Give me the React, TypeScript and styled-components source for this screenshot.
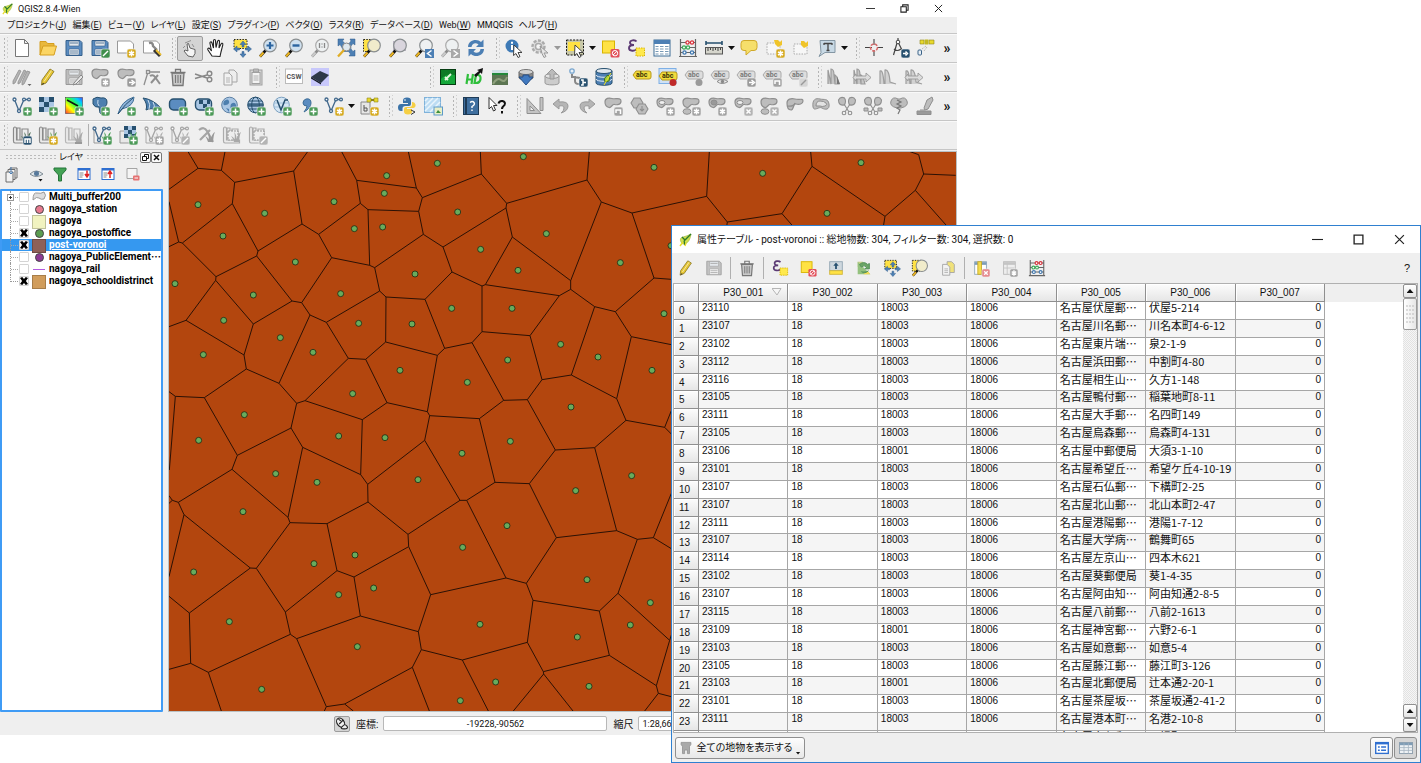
import React from "react";
import styled, { createGlobalStyle, css } from "styled-components";

const GlobalStyle = createGlobalStyle`
  * { box-sizing: border-box; }
  body { margin: 0; background: #fff; color: #111; font-family: Roboto, "Noto Sans CJK JP", sans-serif; }
  button, input, select { font: inherit; color: inherit; }
`;

const gridFont = `"Liberation Sans", "Noto Sans CJK JP", sans-serif`;

/* ---------- icon drawings, all on a 20 x 20 grid ---------- */

const G = "#8f8f8f";
const g = "#bdbdbd";
const B = "#4c7fb4";
const N = "#27506f";

const Badge = ({ c, d, s = "#fff" }: { c: string; d: string; s?: string }) => (
  <g>
    <rect x="11" y="11" width="9" height="9" rx="2" fill={c} stroke="#f0f0f0" strokeWidth=".6" />
    <path d={d} stroke={s} strokeWidth="1.5" fill="none" />
  </g>
);
const PLUS = "M15.5 12.5v6M12.5 15.5h6";
const STAR = "M15.5 12.5v6M13 14l5 3M18 14l-5 3";
const CROSS = "M13.5 13.5l4 4M17.5 13.5l-4 4";
const plus = <Badge c="#4c9a58" d={PLUS} />;
const star = <Badge c="#d6aa1f" d={STAR} />;
const greyStar = <Badge c="#a3a3a3" d={STAR} />;
const greyX = <Badge c="#b4b4b4" d={CROSS} />;
const greyMove = <Badge c="#9b9b9b" d="M13 15.5h4M15.5 13l3 2.5-3 2.5" />;

const Lens = ({ fill = "#eef1f2", grey = false }: { fill?: string; grey?: boolean }) => (
  <g>
    <path d="M8 12L2 18.5" stroke={grey ? "#8a8a8a" : "#111"} strokeWidth="2.6" />
    <path d="M5.5 14.5L2 18.5" stroke={grey ? "#c9c9c9" : "#e8b324"} strokeWidth="2.2" />
    <circle cx="12" cy="7.5" r="6.3" fill={fill} stroke={grey ? "#aaa" : "#8a8f91"} strokeWidth="1.2" />
  </g>
);
const Floppy = ({ c, l }: { c: string; l: string }) => (
  <g>
    <path d="M2 2.5h14l2 2v13H2z" fill={c} stroke={l} />
    <path d="M5 3h10v5H5z" fill="#e4e8ec" stroke={l} strokeWidth=".6" />
    <path d="M5 11h10v6H5z" fill="#f4f4f4" stroke={l} strokeWidth=".6" />
    <path d="M6 13h8M6 15h8M6 5h8" stroke={l} strokeWidth=".8" />
  </g>
);
const Pencil = () => (
  <g>
    <path d="M4 13L12 2l4 2.5L8 16l-4.5 2z" fill="#e6c633" stroke="#8d7a26" strokeWidth=".9" />
    <path d="M13.5 3.5L6 14.5" stroke="#fff" strokeOpacity=".6" />
    <path d="M3.5 18l1.5-2.2 1.3 1z" fill="#333" />
  </g>
);
const Cursor = () => <path d="M10 7l8 7.5h-4l2 4-2 1-2-4-2.5 2z" fill="#fff" stroke="#333" strokeWidth=".9" />;
const Trash = () => (
  <g stroke="#777" strokeWidth="1.3">
    <path d="M4 6h12l-1 12.5H5z" fill="#c9c9c9" />
    <path d="M2.5 5.5h15M7.5 5V2.5h5V5" fill="none" />
    <path d="M7.5 8v8M10 8v8M12.5 8v8" strokeWidth="1.1" />
  </g>
);
const BLOB = "M2 6c0-4 4-4.5 7-3.500s9-1.500 9 2.500-4 4-6.500 3.500S8.500 12 6 11.500 2 9 2 6z";
const Blob = () => <path d={BLOB} fill={g} stroke={G} strokeWidth="1.2" />;
const Copy = ({ c = "#eee" }: { c?: string }) => (
  <g stroke="#a5a5a5">
    <path d="M9 3h5l3 3v9H9z" fill={c} />
    <path d="M4 6h5l3 3v9H4z" fill="#f2f2f2" />
    <path d="M6 11h4M6 13h4M6 15h4" strokeWidth=".8" />
  </g>
);
const Tag = ({ c = "#ddd", l = "#aaa", t = "#777", y = 8 }: { c?: string; l?: string; t?: string; y?: number }) => (
  <g>
    <path d={`M1 ${y}l3-4h13q2 0 2 2v4q0 2-2 2H4z`} fill={c} stroke={l} />
    <text x="4" y={y + 2} fill={t} fontSize="7" fontWeight="700" fontFamily="Roboto">abc</text>
  </g>
);
const Vee = ({ c = B }: { c?: string }) => (
  <g stroke={c} strokeWidth="1.3" fill="#fff">
    <path d="M2.5 3.5L7 15 12 3.5h4" fill="none" />
    <circle cx="2.5" cy="3.5" r="1.5" />
    <circle cx="12" cy="3.5" r="1.4" />
    <circle cx="17" cy="3.5" r="1.4" />
    <circle cx="7" cy="15" r="1.5" />
  </g>
);
const Checker = ({ x, y, n, w }: { x: number; y: number; n: number; w: number }) => (
  <g>
    {Array.from({ length: n * n }, (_, i) => (
      <rect key={i} x={x + (i % n) * w} y={y + Math.floor(i / n) * w} width={w} height={w} fill={((i % n) + Math.floor(i / n)) % 2 ? "#a9c6e4" : N} />
    ))}
  </g>
);
const Globe = ({ c = "#9cc3e6" }: { c?: string }) => (
  <g stroke={N} fill="none">
    <circle cx="9.5" cy="9" r="7.8" fill={c} />
    <path d="M2 9h15.5M3 5h13M3 13h13" />
    <ellipse cx="9.5" cy="9" rx="3.8" ry="7.8" />
  </g>
);
const Epsilon = () => (
  <g>
    <path d="M10.5 3.5C9 1.5 3.5 2 4 5c.2 2 3 2 4 2-2 0-5 .5-5 3 0 3.5 6 3.5 8 1" fill="none" stroke="#5b3a74" strokeWidth="1.9" />
    <rect x="10" y="10" width="8.5" height="8" fill="#ffe94d" stroke="#d8b400" strokeDasharray="1.5 1" />
  </g>
);
const Abacus = () => (
  <g>
    <path d="M2.5 1v18M17.5 1v18M1 18.5h18M3 4.5h14M3 9.5h14M3 14.5h14" stroke="#666" fill="none" strokeWidth="1.2" />
    <g fill="#fff" strokeWidth="1.3">
      <g stroke="#d8313a"><circle cx="9.5" cy="4.5" r="1.6" /><circle cx="14" cy="4.5" r="1.6" /></g>
      <g stroke="#3da957"><circle cx="6" cy="9.5" r="1.6" /><circle cx="10" cy="9.5" r="1.6" /></g>
      <g stroke="#3f77ae"><circle cx="6.5" cy="14.5" r="1.6" /><circle cx="14" cy="14.5" r="1.6" /></g>
    </g>
  </g>
);
const Deselect = () => (
  <g>
    <rect x="2.5" y="3" width="12" height="12" fill="#ffe244" stroke="#d8b400" />
    <rect x="10.5" y="11" width="9" height="8.5" rx="1.5" fill="#e2505a" />
    <circle cx="15" cy="15.2" r="2.7" stroke="#fff" fill="none" />
    <path d="M13 17l4-3.8" stroke="#fff" />
  </g>
);
const FourWay = () => (
  <g>
    <rect x="2" y="1.5" width="13" height="9" fill="#ffe244" stroke="#222" strokeDasharray="1.5 1.3" />
    <g fill={B} stroke="#2c5b8a" strokeWidth=".5">
      <path d="M11 3l3 3.5h-2V9h-2V6.5H8zM11 19.5l3-3.5h-2v-2.5h-2V16H8zM1.500 11L5 8v2h2.500v2H5v2zM19.500 11L16 8v2h-2.500v2H16v2z" />
    </g>
  </g>
);
const Db = () => (
  <g fill={B} stroke={N}>
    <path d="M2 4v12c0 3 16 3 16 0V4" />
    <ellipse cx="10" cy="4" rx="8" ry="2.5" fill="#dfe7ee" />
    <path d="M2 8c0 3 16 3 16 0M2 12c0 3 16 3 16 0" fill="none" stroke="#e6eef5" />
  </g>
);
const Table = () => (
  <g>
    <rect x="2" y="2" width="16" height="16" fill="#fff" stroke="#3d6d96" />
    <path d="M2 2h16v4H2z" fill="#4c7fb4" />
    <path d="M3.5 8.5h3M8 8.5h3.5M13 8.5h3.5M3.5 11h3M8 11h3.5M13 11h3.5M3.5 13.5h3M8 13.5h3.5M13 13.5h3.5M3.5 16h3M8 16h3.5M13 16h3.5" stroke="#7899b5" strokeWidth="1.2" />
  </g>
);
const Box = ({ c = "#8a8a8a" }: { c?: string }) => (
  <path d="M1.5 4q0-2 1.5-2t1.5 2v11h13v3H3q-1.5 0-1.5-2zM5 15V3h3v12M10 15V4h6v11" fill="#ececec" stroke={c} strokeWidth="1.2" />
);
const Grass = ({ c = "#3f9a4b" }: { c?: string }) => (
  <path d="M12 17c-1-3-2-5-3-6 2 1 3 2 3.500 3.500C13 12 13 9 12 7c2 2 2.500 4 2.500 7C15.500 11 17 8 19 7c-1.500 3-1.500 6-2 10z" fill={c} />
);
const Hills = () => <path d="M2 17V3l3 14V2q3 0 3 6l1 9M9 17V8q2 1 4 9z" fill="#c6c6c6" stroke="#9b9b9b" strokeWidth="1.2" />;
const Curves = () => <path d="M2 17V4q3-2 4 13M7 17V3q4-1 5 12l6 2" fill="#d2d2d2" stroke="#9e9e9e" strokeWidth="1.2" />;
const SideArrow = () => <path d="M4 9h10V6l5 4.500-5 4.500v-3H4v2l-3-3.500 3-3.500z" fill="#dcdcdc" stroke="#999" strokeWidth=".9" />;
const Cells = () => (
  <g fill={g} stroke={G} strokeWidth="1.1">
    <path d="M5 2h6l3 5-3 5H5L2 7z" />
    <path d="M10 8h6l3 5-3 5h-6l-3-5z" />
    <path d="M13 10v5M11 13l2 2 2-2" />
  </g>
);
const Scissored = () => (
  <g fill={g} stroke={G} strokeWidth="1.1">
    <path d="M1.500 4q2-4 6-2 2 3 0 7-6 1-6-5zM18.500 4q-2-4-6-2-2 3 0 7 6 1 6-5z" />
    <path d="M7 8l5 8M13 8l-5 8" />
    <circle cx="7" cy="17" r="1.8" fill="#f0f0f0" />
    <circle cx="13" cy="17" r="1.8" fill="#f0f0f0" />
  </g>
);

const art: Record<string, React.ReactNode> = {
  newProject: <path d="M3.5 1.5h9l4 4v13h-13zM12.5 1.5v4h4" fill="#fff" stroke="#777" />,
  open: <g stroke="#d59e1f"><path d="M2 17V3.5h6l1.5 2H16V9" fill="#e9b83c" /><path d="M2 17l3-9h13.5L16 17z" fill="#fbd564" /></g>,
  save: <Floppy c="#5b8cc0" l="#35608c" />,
  saveAs: <g><Floppy c="#5b8cc0" l="#35608c" /><Badge c="#3f8f4d" d="M13 18l5-5" /></g>,
  newComposer: <g><path d="M1.5 3h13l3 3v9h-16z" fill="#fff" stroke="#999" />{star}</g>,
  composers: <g><path d="M1.5 3h13l3 3v9h-16z" fill="#fff" stroke="#999" /><path d="M7 5q4-1 4 3l4 4" stroke="#888" strokeWidth="2.4" fill="none" /><path d="M12 12l6 6" stroke="#333" strokeWidth="3" /><path d="M14 12l5 5" stroke="#e8bb2e" strokeWidth="2" /></g>,
  touch: <g stroke="#555" strokeWidth=".9" fill="#f5f5f5"><path d="M8 18l-4-5 1-1 3 1-1-7 1.5-.5L10 10l5 1.500v4L13 19z" /><path d="M5 5l6-2.500M12 6l2 3M5 8l-2 2" fill="none" stroke="#888" /></g>,
  hand: <path d="M6 18l-4-6c-1-2 1-2.5 2-1l1.5 2L4 5.5c-.5-2 1.5-2 2-.5l1.5 5L7.5 3c0-2 2-2 2 0l.5 6.5L11.5 3.5c.5-1.8 2.3-1.3 2 .3L13 10l2-4c.7-1.5 2.2-.7 1.8.8L15 14l-1 4.5z" fill="#fff" stroke="#222" strokeWidth="1.1" />,
  panSel: <FourWay />,
  zoomIn: <g><Lens fill="#cfe0ef" /><path d="M12 4v7M8.5 7.5h7" stroke="#2b64a0" strokeWidth="2.2" /></g>,
  zoomOut: <g><Lens fill="#cfe0ef" /><path d="M8.5 7.5h7" stroke="#2b64a0" strokeWidth="2.4" /></g>,
  zoomNative: <g><Lens grey /><path d="M9.5 5v5M14.5 5v5M12 5.5v1M12 8.5v1" stroke="#888" strokeWidth="1.3" /></g>,
  zoomFull: <g><path d="M2 1h6L6.500 3 9 5.500h4L15 3l-1-2h5v6l-2-1.500L15 8v3l2 2.500 2-1.500v6h-6l1.500-2-2-2.500H8L5 8 4 6.500 2 8z" fill={B} stroke="#2c5b8a" strokeWidth=".5" /><circle cx="10.5" cy="9" r="4" fill="#dfe8ee" stroke="#888" /><path d="M8 12l-6 6.5" stroke="#e0ad25" strokeWidth="2.3" /></g>,
  zoomSel: <g><rect x="1.5" y="1.5" width="11" height="12" fill="#ffe244" stroke="#222" strokeDasharray="1.5 1.3" /><Lens fill="#f1eccb" /></g>,
  zoomLayer: <g><rect x="5" y="3" width="13" height="10" fill="#b9b3c0" /><Lens fill="#d9d5dd" /></g>,
  zoomLast: <g><Lens /><rect x="11" y="11" width="9" height="9" fill={B} /><path d="M17.5 12.5l-4 3 4 3" stroke="#fff" strokeWidth="1.5" fill="none" /></g>,
  zoomNext: <g><Lens grey /><rect x="11" y="11" width="9" height="9" fill="#a9a9a9" /><path d="M13.5 12.5l4 3-4 3" stroke="#fff" strokeWidth="1.5" fill="none" /></g>,
  refresh: <g fill={B}><path d="M2 9C2 2 11 0 15 4l2.500-2.500V9H10l2.500-2.500C10 4 6 5 5.500 9z" /><path d="M18 11c0 7-9 9-13 5l-2.500 2.500V11H10l-2.500 2.500C10 16 14 15 14.500 11z" /></g>,
  identify: <g><circle cx="8" cy="8" r="6.5" fill="#3e7ab6" /><path d="M8 7v5M8 3.8v2" stroke="#fff" strokeWidth="2" /><Cursor /></g>,
  action: <g><circle cx="8.5" cy="8.5" r="6" fill="#ddd" stroke="#aaa" strokeWidth="2.4" strokeDasharray="3 1.5" /><circle cx="8.5" cy="8.5" r="3" fill="#f4f4f4" stroke="#aaa" strokeWidth="1.5" /><path d="M10 8l8 7h-4l2 3.500-2 1-2-4z" fill="#e6e6e6" stroke="#999" /></g>,
  select: <g><rect x="1.5" y="2" width="17" height="15" fill="#c9c9a8" stroke="#111" strokeDasharray="2 1.3" /><rect x="3" y="4" width="12" height="9" fill="#ffe244" /><Cursor /></g>,
  deselect: <Deselect />,
  epsilon: <Epsilon />,
  table: <Table />,
  abacus: <Abacus />,
  measure: <g><path d="M2 5h16M2 3v4M18 3v4" stroke="#27506f" strokeWidth="1.6" /><rect x="1.5" y="9.5" width="17" height="6.5" fill="#d5d5cc" stroke="#555" /><path d="M4 10v3M6.5 10v2M9 10v3M11.5 10v2M14 10v3M16.5 10v2" stroke="#444" /></g>,
  tip: <path d="M5 2.5h10q3 0 3 3v4q0 3-3 3h-3L7 17v-4.500H5q-3 0-3-3v-4q0-3 3-3z" fill="#f6df6b" stroke="#d0a92a" />,
  newBookmark: <g><rect x="2" y="5" width="13" height="11" stroke="#aaa" strokeDasharray="1.5 1.2" fill="#f7f7f7" /><path d="M9 2h4l2 2 2-2v5l-4 2-3-3z" fill="#f0c42a" />{star}</g>,
  bookmark: <g><rect x="3" y="6" width="13" height="10" stroke="#aaa" strokeDasharray="1.5 1.2" fill="#f7f7f7" /><path d="M10 3h3l2 2 2-2v5l-4 2-3-3z" fill="#f0c42a" /></g>,
  textNote: <g><path d="M3 2.5h15v12H8L2 18.5l2-4z" fill="#c8d9e5" stroke="#8496a3" /><path d="M7 5.5h8M11 5.5v7M7 5v2M15 5v2M9.5 12.5h3" stroke="#444" strokeWidth="1.3" /></g>,
  crosshair: <g><path d="M10 1v6M10 12v6M1 9.5h7M13 9.5h6" stroke="#444" strokeWidth="1.1" /><circle cx="10" cy="9.5" r="3.5" stroke="#d86a6a" strokeWidth="1.6" fill="none" strokeDasharray="3 1.2" /></g>,
  compass: <g><path d="M7 5L3.5 17M8.5 5L12 12M4 11q3 3 7 0M8 0v3" stroke="#444" fill="none" strokeWidth="1.2" /><circle cx="8" cy="4" r="1.8" stroke="#444" fill="#fff" /><Badge c={N} d="M13 15.5h3M15.5 13.5l2 2-2 2" /></g>,
  gps: <g><path d="M4 2h4v4H4zM13 2h5v4h-5z" fill="#e8d92c" stroke="#8d8420" strokeWidth=".6" /><rect x="8.5" y="1.5" width="4" height="5" fill="#c2b822" /><rect x="2" y="12" width="3.5" height="5" rx="1" stroke="#3a6288" fill="#e6eef5" /><path d="M6 11l4-3M8 13l3-4" stroke="#aaa" strokeDasharray="1 1" /></g>,

  edits: <g><path d="M1 14L7 3l2 1-6 12-2 1zM6 15l6-12 2 1-6 12-2 1zM10 15l5-11 3 1-6 12-2 1z" fill="#b3b3b3" stroke={G} strokeWidth=".8" /><path d="M15.5 17h4l-2 2z" fill="#666" /></g>,
  pencil: <Pencil />,
  saveEdits: <g><Floppy c="#bcbcbc" l="#999" /><path d="M10 16l7-8 2 2-7 7-3 1z" fill="#e8e8e8" stroke="#888" /></g>,
  addFeature: <g><Blob />{greyStar}</g>,
  moveFeature: <g><Blob />{greyMove}</g>,
  nodes: <g stroke={G} fill="none" strokeWidth="1.3"><path d="M2 18L6 5h12" /><rect x="4.5" y="3.5" width="3" height="3" fill="#eee" /><path d="M8 9q3-2 5 1l5 7M16 8l-7 8" strokeWidth="2" /></g>,
  trash: <Trash />,
  cut: <g stroke="#888" fill="none" strokeWidth="1.4"><path d="M1 7l12 4M1 11.5L13 8" /><circle cx="15.5" cy="6.5" r="2.3" /><circle cx="15.5" cy="12.5" r="2.3" /></g>,
  copy: <Copy />,
  paste: <g stroke="#a0a0a0"><rect x="4" y="3" width="12" height="15" fill="#d5d5d5" /><rect x="6" y="5.5" width="8" height="11" fill="#f3f3f3" /><path d="M7.5 2h5v3h-5z" fill="#bbb" /><path d="M7.5 9h5M7.5 11h5M7.5 13h5" strokeWidth=".8" /></g>,
  csw: <g><rect x="1.5" y="2" width="17" height="14.5" fill="#fff" stroke="#bbb" /><text x="2.5" y="11.5" fontSize="7" fontWeight="700" fill="#555" fontFamily="Roboto">CSW</text></g>,
  tile: <g><rect x="1" y="1" width="18" height="18" fill="#c8c8fb" /><path d="M1 10l9-6 9 4-8 8z" fill="#2d3748" /><path d="M1 10l10 6v1.5L1 11.5z" fill="#151b26" /></g>,
  greenMap: <g><rect x="2.5" y="2.5" width="15" height="15" fill="#0d7a26" stroke="#063d12" /><path d="M3 12q5-6 14-4v9H3z" fill="#15a83a" /><path d="M7 13l6-6M7 10l3 3" stroke="#e4f7df" strokeWidth="1.8" /></g>,
  hd: <g><path d="M4 7L2.500 17M3 12.500h5M9 7L7.500 17M12 8l-1.500 8h1.500q4 0 4.500-4 .5-4-3-4z" stroke="#2fbf3c" strokeWidth="2.200" fill="none" /><path d="M10 8l5-4-2-1 6-2-1 6-1.500-1.500L12 10z" fill="#111" /></g>,
  photo: <g><rect x="2" y="3" width="16" height="15" fill="#5c7552" /><rect x="2" y="3" width="16" height="4" fill="#cfe0e4" /><path d="M2 7h16" stroke="#23883a" strokeWidth="2" /><path d="M3 17q4-7 8-4t6-3" stroke="#8ea07c" strokeWidth="2" fill="none" /></g>,
  dbDown: <g><path d="M3 5v6c0 2 14 2 14 0V5" fill="#888" stroke="#666" /><ellipse cx="10" cy="5" rx="7" ry="2.5" fill="#d0d0d0" stroke="#777" /><path d="M3 10h4V8h6v2h4l-7 8z" fill="#4079c0" stroke="#264f85" /></g>,
  dbUp: <g><path d="M3 9v7c0 2.5 14 2.5 14 0V9" fill="#ccc" stroke="#999" /><ellipse cx="10" cy="9" rx="7" ry="2.5" fill="#e2e2e2" stroke="#999" /><path d="M5 7l5-5 5 5h-3v5H8V7z" fill="#bbb" stroke="#999" /></g>,
  chain: <g><circle cx="4" cy="4" r="2.2" stroke="#7ba7cf" fill="#e9f1f8" strokeWidth="1.3" /><path d="M4 7v3h3v4q0 3 4 3M6 10l6 1" stroke="#888" strokeWidth="2" fill="none" /><Badge c={N} d="M13 13h2v5h-2M15 15.5h3" /></g>,
  dbQ: <g><Db /><path d="M14 8q-5 3-3 7l4-1q2-4-1-6z" fill="#9bcf45" stroke="#3e6e1e" /><path d="M17 6l-7 12" stroke="#f0e020" /></g>,
  label: <Tag c="#f1dc3c" l="#b7981c" t="#3b3205" />,
  labelPin: <g><rect x="1" y="1.5" width="17" height="15" fill="#cfe1f5" stroke="#7eb0e6" /><Tag c="#f1dc3c" l="#b7981c" t="#3b3205" y={9} /><circle cx="15" cy="15.5" r="3.5" fill="#c02a2a" /></g>,
  labelPinGrey: <g><Tag /><circle cx="15" cy="15.5" r="3.5" fill="#9a9a9a" /></g>,
  labelEye: <g><Tag /><path d="M7 14.5q5-4 11 0-6 4-11 0z" fill="#eee" stroke="#888" /><circle cx="12.5" cy="14.5" r="1.7" fill="#888" /></g>,
  labelMove: <g><Tag />{greyMove}</g>,
  labelTurn: <g><Tag /><Badge c="#a3a3a3" d="M13 17v-3h4.500v4" /></g>,
  labelEdit: <g><Tag /><Badge c="#d5d5d5" d="M13 18l5-5" s="#999" /></g>,
  histA: <g><Hills /><path d="M11 17V9l3 8z" fill="#777" /></g>,
  histB: <g><Hills /><SideArrow /></g>,
  histC: <Curves />,
  histD: <g><Curves /><SideArrow /></g>,

  addVector: <g><Vee c="#41688c" />{plus}</g>,
  addRaster: <g><Checker x={1} y={1} n={3} w={5} />{plus}</g>,
  addSpectrum: <g><defs><linearGradient id="hue" x1="0" y1="1" x2="1" y2="0"><stop offset="0" stopColor="#f33" /><stop offset=".3" stopColor="#ff0" /><stop offset=".55" stopColor="#3f4" /><stop offset=".8" stopColor="#0cf" /><stop offset="1" stopColor="#44f" /></linearGradient></defs><rect x="1.5" y="1.5" width="17" height="16" fill="url(#hue)" stroke="#333" strokeWidth=".5" /><path d="M3 4l11 6" stroke="#111" strokeWidth="1.6" />{plus}</g>,
  addPostgis: <g><path d="M3 3q4-3 8-1 6-1 6 4t-4 5v6q-2 2-3 0l-1-6q-4 1-6-3z" fill="#4d7fae" stroke={N} /><path d="M8 4q-1 4 1 6" stroke="#cfe0ef" fill="none" />{plus}</g>,
  addSpatialite: <g><path d="M2 18Q5 5 18 1q0 9-12 12z" fill="#8fb3d9" stroke="#3d6d96" /><path d="M2 18Q9 8 17 2" stroke="#27506f" fill="none" />{plus}</g>,
  addMssql: <g><path d="M1 2q9 1 17 9l-2 4Q9 11 4 14q2-6-3-12z" fill="#4d7fae" stroke={N} /><path d="M6 4q3 5 1 9M11 6q2 3 1 7" stroke="#cfe0ef" fill="none" />{plus}</g>,
  addOracle: <g><rect x="1.5" y="3" width="16" height="11" rx="4" fill="#5b8cc0" stroke={N} strokeWidth="1.4" />{plus}</g>,
  addOracleRaster: <g><rect x="1.5" y="3" width="16" height="11" rx="4" fill="#a9c6e4" stroke={N} strokeWidth="1.4" /><path d="M5 4h4v4H5zM9 8h4v4H9zM13 4h3v4h-3z" fill={N} />{plus}</g>,
  addWms: <g><circle cx="9.5" cy="9" r="7.8" fill="#a9c6e4" stroke="#5b7fa3" /><path d="M4 5q4-3 5 0t-3 4-2-4zM11 8q4-3 5 1t-3 4-2-5zM6 12l3 1v3z" fill="#4d7fae" />{plus}</g>,
  addWcs: <g><Globe c="#a9c6e4" /><path d="M2 7h15v4H2z" fill={N} opacity=".6" />{plus}</g>,
  addWfs: <g><circle cx="9.5" cy="9" r="7.8" fill="#d5e6f4" stroke="#7ba0c0" /><path d="M2 7h15M2 11h15" stroke="#9fc0dc" /><path d="M5 4l4 10 4-10h3" stroke={N} strokeWidth="1.5" fill="none" />{plus}</g>,
  addCsv: <g><path d="M8 3q5-1 5 4 0 5-7 9 3-4 3-6-4 0-4-3 0-3 3-4z" fill="#5b8cc0" stroke="#3d6d96" />{plus}</g>,
  newShape: <g><Vee c="#41688c" />{star}</g>,
  newGpx: <g><path d="M2 6h9v12H2z" fill="#e6e6e6" stroke="#888" /><path d="M5 9v6h3v-3H5" stroke="#555" fill="none" /><path d="M8 2h4v4H8zM15 2h4v4h-4z" fill="#e8d92c" stroke="#8d8420" strokeWidth=".6" /><path d="M12 4h3" stroke="#8d8420" strokeWidth="2" />{star}</g>,
  python: <g><path d="M10 1.5q-4 0-4 3V7h5v1H4q-3 0-3 3.500T4 15h1.500v-2.500q0-2.500 3-2.500H12q2 0 2-2V4.500q0-3-4-3z" fill="#3b73a8" /><path d="M11 18.500q4 0 4-3V13h-5v-1h6.500q2.500-1 2-3.500-.5-2.500-3-2.500H15v3q0 2-2.500 2H9q-2 0-2 2v2.500q0 3 4 3z" fill="#f5cf45" /><circle cx="8" cy="4" r=".8" fill="#fff" /><path d="M14 14l4 2-4 2.500" stroke="#333" fill="none" /></g>,
  tilesLayer: <g><rect x="1.5" y="1.5" width="16" height="15" fill="#bcdcf3" stroke="#7fb2da" /><path d="M2 5l3-3M2 10l8-8M2 15l13-13M7 16L17 6M12 16l5-5" stroke="#e8f4fc" strokeWidth="1.5" /><rect x="11" y="11" width="8.5" height="8" fill="#e9efc8" stroke="#5c9ac9" /><path d="M13 17l2-3 3 3z" fill="#3d8f3a" /></g>,
  helpBook: <g><rect x="2.5" y="1.5" width="15" height="17" fill="#3f6f9f" stroke="#1e3b57" /><path d="M5 2v16" stroke="#1e3b57" strokeWidth="2" /><path d="M9 6.5q2.5-2 4 0t-2 4V12M11 13.5V15" stroke="#fff" strokeWidth="1.4" fill="none" /></g>,
  whatsThis: <g><path d="M2 1.5l8 8H6.5l2 4.500-2 1-2-4.500L2 13z" fill="#fff" stroke="#333" /><path d="M11.5 7.5q1-3 4-2.500 3.500 1 2 4-2.500 2-2.500 4M15 15v2.500" stroke="#111" strokeWidth="2" fill="none" /></g>,
  triangle: <g fill="#c4c4c4" stroke={G}><path d="M2 2.5l14 15H2zM5 10v4.5h4.5z" fillRule="evenodd" /><path d="M15 1.5h3v13h-3z" /></g>,
  undo: <path d="M8 3L2 8l6 5v-3q5-1 5 2t-3 5q7-2 7-7t-9-4z" fill="#b5b5b5" stroke="#9a9a9a" />,
  redo: <path d="M12 3l6 5-6 5v-3q-5-1-5 2t3 5q-7-2-7-7t9-4z" fill="#b5b5b5" stroke="#9a9a9a" />,
  rotate: <g><Blob /><Badge c="#a3a3a3" d="M13 17v-3h4.500v4" /></g>,
  simplify: <Cells />,
  addRing: <g><Blob /><ellipse cx="7" cy="6.5" rx="3" ry="2" fill="#f0f0f0" stroke={G} />{greyStar}</g>,
  addPart: <g><Blob /><ellipse cx="6" cy="15.5" rx="4" ry="2.8" fill={g} stroke={G} />{greyStar}</g>,
  fillRing: <g><Blob /><ellipse cx="7" cy="6.5" rx="3" ry="2.5" fill="#999" stroke={G} />{greyStar}</g>,
  delRing: <g><Blob /><ellipse cx="7" cy="6.5" rx="3" ry="2" fill="#f0f0f0" stroke={G} />{greyX}</g>,
  delPart: <g><Blob /><ellipse cx="6" cy="15.5" rx="4" ry="2.8" fill={g} stroke={G} />{greyX}</g>,
  reshape: <g stroke={G} strokeWidth="1.2" fill={g}><path d="M2 7c0-4 4-5 8-4s8-1 8 2-4 4-7 3-2 6-5 6-4-3-4-7z" /><path d="M2 10q7 1 8-3" fill="none" /></g>,
  offset: <g stroke={G} fill="none"><path d="M2 11C1 3 5 2 9 3s8-1 9 5-4 6-7 4-8 4-9-1z" fill={g} /><path d="M5 10q0-5 4-5t6 2-1 3-5 0z" fill="#e2e2e2" /></g>,
  split: <Scissored />,
  splitParts: <g><Scissored /><path d="M1 12h4v3H1zM15 12h4v3h-4z" fill={g} stroke={G} /></g>,
  merge: <g fill={g} stroke={G}><path d="M9 3Q4 0 2 5t6 7h4q8-2 6-7t-7-2z" /><path d="M8 4l4 2-4 2 4 2-4 2 3 2-2 4" fill="none" stroke="#777" strokeWidth="1.2" /></g>,
  stamp: <g fill={g} stroke={G}><path d="M2 15h14v3.5H2z" fill="#9a9a9a" /><path d="M9 12l3-8 5-3 1 3-5 9-3 1zM5 14h5" /></g>,

  grassOpen: <g><Box /><Grass c="#4b6d55" /><Badge c={N} d="M13 18v-4h5v4M15.5 14v4" /></g>,
  grassNew: <g><Box /><Grass c="#5f9a4d" />{star}</g>,
  grassClose: <g><Box c="#b5b5b5" /><Grass c="#a9a9a9" /><path d="M11 18h7" stroke="#999" strokeWidth="2" /></g>,
  grassVec: <g><path d="M2 4v14h10" stroke="#999" fill="none" /><Vee c="#41688c" /><Grass />{plus}</g>,
  grassRas: <g><path d="M2 6v12h10V6z" fill="#e8e8e8" stroke="#999" /><Checker x={6} y={1} n={3} w={4} /><Grass />{plus}</g>,
  grassNewVec: <g><path d="M2 4v14h10" stroke="#aaa" fill="none" /><Vee c="#a5a5a5" /><Grass c="#b0b0b0" />{greyStar}</g>,
  grassEdit: <g><path d="M2 4v14h10" stroke="#aaa" fill="none" /><Vee c="#a5a5a5" /><Grass c="#b0b0b0" /><Badge c="#b4b4b4" d="M13 18l5-5" /></g>,
  grassTools: <g><path d="M3 5q5-4 8 1l6 11M14 5L4 15" stroke="#a5a5a5" strokeWidth="2.2" fill="none" /><Grass c="#999" /></g>,
  grassRegion: <g><Box c="#ababab" /><path d="M6 6h10v9H6z" fill="#eee" stroke="#999" strokeDasharray="2 1" /><Grass c="#a9a9a9" /></g>,
  grassRegionEdit: <g><Box c="#ababab" /><path d="M6 6h10v9H6z" fill="#eee" stroke="#999" strokeDasharray="2 1" /><Badge c="#b4b4b4" d="M13 18l5-5" /></g>,

  layers: <g fill="#f2f2f2" stroke="#6c6c6c"><path d="M8 4h7v10H8z" /><path d="M6 5.5h7v10H6z" /><path d="M4 8h7v10H4z" /><path d="M9 3v7M7 8l2 2 2-2" stroke="#4c7fb4" /></g>,
  eye: <g><path d="M4 10q6-6 13 0-7 5-13 0z" fill="#dfe6ea" stroke="#7f8b94" /><circle cx="10.5" cy="9.5" r="2.5" fill="#57799b" /><path d="M12.5 15h4l-2 2.5z" fill="#111" /></g>,
  filter: <path d="M4 4h12v2l-4.500 5v6h-3v-6L4 6z" fill="#43a254" stroke="#25743a" />,
  expand: <g><rect x="4" y="4.5" width="12" height="11" fill="#fff" stroke="#2f6fd0" /><path d="M4 5.5h12" stroke="#2f6fd0" strokeWidth="2" /><path d="M5.5 9h4M5.5 11h4M5.5 13h3" stroke="#888" /><path d="M13 6.5v5M11 10l2 3 2-3" stroke="#e02424" strokeWidth="1.5" fill="#e02424" /></g>,
  collapse: <g><rect x="4" y="4.5" width="12" height="11" fill="#fff" stroke="#2f6fd0" /><path d="M4 5.5h12" stroke="#2f6fd0" strokeWidth="2" /><path d="M5.5 9h4M5.5 11h4M5.5 13h3" stroke="#888" /><path d="M12 14V9M10 10l2-3 2 3" stroke="#e02424" strokeWidth="1.5" fill="#e02424" /></g>,
  removeLayer: <g><path d="M5 4.5h10v10H5z" fill="#f5f5f5" stroke="#a5a5a5" /><rect x="11" y="11.5" width="6.5" height="5" rx="1" fill="#e57373" /><path d="M12.5 14H16" stroke="#fff" /></g>,

  saveTable: <Floppy c="#c2c2c2" l="#a0a0a0" />,
  moveTop: <g><rect x="3" y="3" width="14" height="10" fill="#cfd8de" stroke="#93a5b3" /><path d="M10 4l3 3.5h-2V11H9V7.500H7z" fill={N} /><rect x="3" y="13" width="14" height="4" fill="#ffe244" stroke="#d0b53a" /></g>,
  invert: <g><path d="M3 3h6v6H3z" fill="#c7cf8a" /><path d="M3 17V3l14 14z" fill="#94c17e" /><path d="M9 17h8l-3-4z" fill="#f1dc55" /><path d="M5 6q5-4 9 0l2-1v6h-5l2-2q-3-3-6 0zM15 13q-4 4-8 1" fill="#6aa565" stroke="#54905a" /></g>,
  copyRows: <Copy c="#f1e27a" />,
  delColumn: <g><rect x="3" y="3" width="13" height="14" fill="#fff" stroke="#8fa6b8" /><path d="M3 5h13" stroke="#7d9cb8" strokeWidth="3" /><rect x="6.5" y="3" width="4" height="14" fill="#f4dc4d" stroke="#c9ab28" /><Badge c="#e58a8e" d={CROSS} /></g>,
  newColumn: <g><rect x="4" y="3" width="13" height="14" fill="#eee" stroke="#bbb" /><path d="M4 5h13" stroke="#c4c4c4" strokeWidth="3" /><path d="M8 4v13M4 10h12" stroke="#c4c4c4" />{greyStar}</g>,
  sheet: <path d="M3 2h14v3l-2 3v10h-3v-5H8v5H5V8L3 5z" fill="#aaa" stroke="#888" />,
  form: <g><rect x="3" y="4" width="14" height="12" fill="#fff" stroke="#2f6fd0" strokeWidth="1.5" /><path d="M3 5h14" stroke="#2f6fd0" strokeWidth="2" /><path d="M5.5 9h2M5.5 12.5h2M9 9h5.500M9 12.500h5.500" stroke="#2f6fd0" strokeWidth="1.7" /></g>,
  tableView: <g><rect x="2" y="3" width="16" height="14" fill="#eef2f5" stroke="#7f93a3" /><path d="M2 5h16" stroke="#7f9db6" strokeWidth="3" /><path d="M7.5 4v13M13 4v13M2 9.5h16M2 13h16" stroke="#a4b4c0" /></g>,
  mouse: <g fill="#eee" stroke="#222" strokeWidth="1.6"><ellipse cx="8" cy="8" rx="5" ry="7" transform="rotate(-35 8 8)" /><path d="M5 3l5 4M6 10l6-6M11 13q3-4 6 0t-4 4-2-4" /></g>,
};

const Art = ({ name, size = 20 }: { name: string; size?: number }) => (
  <svg width={size} height={size} viewBox="0 0 20 20" fill="none" aria-hidden="true">
    {art[name]}
  </svg>
);

const Leaf = ({ size }: { size: number }) => (
  <svg width={size} height={size} viewBox="0 0 14 14" aria-hidden="true">
    <path d="M2 9Q0 5 4 4t8-3q-1 8-6 10-3 1-4-2z" fill="#cfe04f" stroke="#9db53a" strokeWidth=".6" />
    <path d="M12 1L5 8M5 8l1 4M3 4l3 3" stroke="#2b7a2a" strokeWidth="1.4" fill="none" />
    <path d="M1 13l3-4M6 13l1-3" stroke="#e8dc2c" strokeWidth="1.4" />
  </svg>
);

/* ---------- desktop and main window ---------- */

const Desktop = styled.div`
  position: relative;
  min-height: 100vh;
  overflow: hidden;
`;

const MainWindow = styled.main`
  display: flex;
  flex-direction: column;
  width: calc(100% - 464px);
  height: calc(100vh - 28px);
  background: #efefef;
`;

const TitleBar = styled.header<{ $tall?: boolean }>`
  display: flex;
  align-items: center;
  flex: none;
  height: ${(p) => (p.$tall ? 27 : 17)}px;
  padding: ${(p) => (p.$tall ? "0 0 0 7px" : "0 2px")};
  background: #fff;
`;

const Title = styled.h1<{ $size: number }>`
  flex: 1;
  margin: 0 0 0 4px;
  font-size: ${(p) => p.$size}px;
  font-weight: 400;
  line-height: 16px;
  white-space: nowrap;
  font-feature-settings: "palt";
`;

const WindowButton = styled.button<{ $w: number }>`
  display: grid;
  place-items: center;
  width: ${(p) => p.$w}px;
  height: 16px;
  padding: 0;
  border: 0;
  background: none;
`;

const MenuBar = styled.nav`
  display: flex;
  align-items: center;
  flex: none;
  gap: 6px;
  height: 16px;
  padding-left: 7px;
`;

const MenuItem = styled.button`
  padding: 0;
  border: 0;
  background: none;
  font: 9px/14px Roboto, "Noto Sans CJK JP", sans-serif;
  font-feature-settings: "palt";
  white-space: nowrap;
`;

const ToolBar = styled.div`
  display: flex;
  align-items: center;
  flex: none;
  height: 29px;
  border-top: 1px solid #c6c6c6;
  box-shadow: inset 0 1px 0 #f9f9f9;
  overflow: hidden;
`;

const Grip = styled.span<{ $first?: boolean }>`
  flex: none;
  width: ${(p) => (p.$first ? 9 : 12)}px;
  height: 22px;
  background: radial-gradient(circle, #b4b4b4 1px, transparent 1px) right 3px top 0 / 3px 4px repeat-y,
    radial-gradient(circle, #d0d0d0 1px, transparent 1px) right 0 top 2px / 3px 4px repeat-y;
`;

const ToolButton = styled.button<{ $w?: number; $on?: boolean; $h?: number }>`
  display: grid;
  place-items: center;
  flex: none;
  width: ${(p) => p.$w ?? 26}px;
  height: ${(p) => p.$h ?? 25}px;
  padding: 0;
  border: 1px solid ${(p) => (p.$on ? "#9d9d9d" : "transparent")};
  border-radius: 2px;
  background: ${(p) => (p.$on ? "#d4d4d4" : "none")};
`;

const Arrow = styled.button<{ $dim?: boolean }>`
  flex: none;
  width: 9px;
  height: 20px;
  padding: 0;
  border: 0;
  background: none;
  &::before {
    content: "";
    display: block;
    margin: auto;
    width: 7px;
    height: 4px;
    background: ${(p) => (p.$dim ? "#999" : "#111")};
    clip-path: polygon(0 0, 100% 0, 50% 100%);
  }
`;

const Separator = styled.span<{ $w: number }>`
  flex: none;
  width: ${(p) => p.$w}px;
  height: 22px;
  background: linear-gradient(#b0b0b0, #b0b0b0) center / 1px 100% no-repeat;
`;

const Gap = styled.span`
  flex: none;
  width: 90px;
`;

const More = styled.button`
  width: 16px;
  margin-left: auto;
  padding: 0 4px 0 0;
  border: 0;
  background: none;
  font: 700 14px/20px Roboto, sans-serif;
`;

/* "|" starts a new grip group, "-" is a separator, "_" an empty stretch, "v" / "w" a drop arrow */
const bars = [
  "newProject open save saveAs newComposer composers | touch* hand panSel zoomIn zoomOut zoomNative zoomFull zoomSel zoomLayer zoomLast zoomNext refresh | identify action w select v deselect epsilon table abacus measure v tip newBookmark bookmark textNote v | crosshair compass gps",
  "edits pencil saveEdits addFeature moveFeature nodes trash cut copy paste | csw tile _ | greenMap hd photo dbDown dbUp chain dbQ | label labelPin labelPinGrey labelEye labelMove labelTurn labelEdit | histA histB histC histD",
  "addVector addRaster addSpectrum addPostgis addSpatialite addMssql addOracle addOracleRaster addWms addWcs addWfs addCsv newShape v newGpx | python tilesLayer | helpBook whatsThis | triangle undo redo rotate simplify addRing addPart fillRing delRing delPart reshape offset split splitParts merge stamp",
  "grassOpen grassNew grassClose - grassVec grassRas grassNewVec grassEdit grassTools grassRegion grassRegionEdit",
];

const Tools = ({ items, w, size }: { items: string; w?: number; size?: number }) => (
  <>
    {items.split(" ").map((t, i) => {
      if (t === "|") return <Grip key={i} />;
      if (t === "-") return <Separator key={i} $w={w ? 5 : 2} />;
      if (t === "_") return <Gap key={i} />;
      if (t === "v" || t === "w") return <Arrow key={i} $dim={t === "w"} aria-label="menu" />;
      const name = t.replace("*", "");
      return (
        <ToolButton key={i} $w={w} $on={t !== name} aria-label={name}>
          <Art name={name} size={size} />
        </ToolButton>
      );
    })}
  </>
);

const menus: [string, string?][] = [
  ["プロジェクト", "J"], ["編集", "E"], ["ビュー", "V"], ["レイヤ", "L"], ["設定", "S"], ["プラグイン", "P"],
  ["ベクタ", "O"], ["ラスタ", "R"], ["データベース", "D"], ["Web", "W"], ["MMQGIS"], ["ヘルプ", "H"],
];

/* ---------- layer panel ---------- */

const Workspace = styled.div`
  display: flex;
  flex: 1;
  min-height: 0;
  border-top: 1px solid #c6c6c6;
  padding-top: 1px;
`;

const Dock = styled.aside`
  display: flex;
  flex-direction: column;
  flex: none;
  width: 163px;
`;

const DockTitle = styled.div`
  display: flex;
  align-items: center;
  height: 12px;
  padding: 0 1px 0 2px;
  font-size: 9px;
  line-height: 12px;
  font-feature-settings: "palt";
`;

const Dots = styled.span`
  flex: 1;
  height: 6px;
  margin: 0 3px;
  background: radial-gradient(circle, #bbb 1px, transparent 1px) 0 0 / 4px 3px;
`;

const DockButton = styled.button`
  display: grid;
  place-items: center;
  width: 11px;
  height: 11px;
  padding: 0;
  border: 1px solid #777;
  border-radius: 2px;
  background: #fafafa;
`;

const DockTools = styled.div`
  display: flex;
  align-items: center;
  height: 26px;
  padding-bottom: 4px;
`;

const Tree = styled.ul`
  flex: 1;
  margin: 0;
  padding: 0;
  list-style: none;
  border: 2px solid #3f9bf5;
  border-radius: 1px;
  background: #fff;
`;

const Layer = styled.li<{ $on?: boolean; $last?: boolean }>`
  display: flex;
  align-items: center;
  height: 12px;
  background: ${(p) => (p.$on ? "#3598f0" : "none")};
  color: ${(p) => (p.$on ? "#fff" : "#000")};
  text-decoration: ${(p) => (p.$on ? "underline" : "none")};
  &::before {
    content: "";
    width: 7px;
    margin-left: 8px;
    align-self: flex-start;
    height: ${(p) => (p.$last ? 6 : 12)}px;
    border-left: 1px dotted #999;
    background: linear-gradient(90deg, #aaa 50%, transparent 50%) 0 6px / 2px 1px repeat-x;
    border-bottom: ${(p) => (p.$last ? "1px dotted #999" : "0")};
  }
`;

const LayerLabel = styled.label`
  display: flex;
  align-items: center;
  margin-left: 1px;
  font: 700 10px/12px Roboto, "Noto Sans CJK JP", sans-serif;
  white-space: nowrap;
`;

const Ellipsis = styled.span`
  font-family: "Noto Sans CJK JP", sans-serif;
`;

const Check = styled.input`
  appearance: none;
  width: 10px;
  height: 10px;
  margin: 0 3px 0 0;
  border: 1px solid #d4d4d4;
  border-radius: 1px;
  background: #fff;
  &:checked::before {
    content: "";
    display: block;
    width: 8px;
    height: 8px;
    background: #000;
    clip-path: polygon(0 14%, 28% 0, 50% 24%, 72% 0, 100% 14%, 74% 50%, 100% 86%, 72% 100%, 50% 76%, 28% 100%, 0 86%, 26% 50%);
  }
`;

const Swatch = styled.span<{ $kind: string; $c: string }>`
  display: grid;
  place-items: center;
  width: 14px;
  height: 12px;
  margin-right: 3px;
  &::before {
    content: "";
    ${(p) => p.$kind === "dot" && css`width: 7px; height: 7px; border-radius: 50%; border: 1px solid #444;`}
    ${(p) => p.$kind === "area" && css`width: 12px; height: 12px; border: 1px solid #0003;`}
    ${(p) => p.$kind === "line" && css`width: 12px; height: 1px;`}
    background: ${(p) => p.$c};
  }
`;

const Expander = styled.button`
  flex: none;
  width: 7px;
  height: 7px;
  margin: 0 4px 0 -11px;
  padding: 0;
  border: 1px solid #999;
  background: linear-gradient(#333, #333) center / 3px 1px no-repeat, linear-gradient(#333, #333) center / 1px 3px no-repeat, #fff;
`;

const layers: { name: string; kind: string; c: string; on: boolean; sel?: boolean; cut?: boolean }[] = [
  { name: "Multi_buffer200", kind: "blob", c: "", on: false },
  { name: "nagoya_station", kind: "dot", c: "#e77b90", on: false },
  { name: "nagoya", kind: "area", c: "#f1f3c0", on: false },
  { name: "nagoya_postoffice", kind: "dot", c: "#5b9c50", on: true },
  { name: "post-voronoi", kind: "area", c: "#8d6058", on: true, sel: true },
  { name: "nagoya_PublicElement", kind: "dot", c: "#8c3a94", on: false, cut: true },
  { name: "nagoya_rail", kind: "line", c: "#b45be0", on: false },
  { name: "nagoya_schooldistrinct", kind: "area", c: "#d19d5c", on: true },
];

/* ---------- map: survey sheets in thirds of a pixel ---------- */

const MapFrame = styled.section`
  flex: 1;
  min-width: 0;
  margin-left: 5px;
  border: 1px solid #b9c1c4;
  background: #b3460e;
  overflow: hidden;
  svg { display: block; width: 100%; height: 100%; }
`;

const sheets = [
  {
    at: "0 0",
    d: "M60 5L90 55 160 61 171 5M90 55L0 120M160 61L200 97 377 63 419 5M200 97L193 161 43 279 32 276 3 290M3 155L32 276M193 161L270 303 402 222 377 63M402 222L452 253 577 160 566 91 521 5M566 91L745 114 721 5M745 114L763 143 940 72M763 143L752 184 600 179 577 160M600 179L605 346 620 353 766 253 752 184M766 253L825 291M452 253L491 323 605 346M491 323L401 458 372 453 266 318 270 303M266 318L144 380 43 279M144 380L143 391 54 511 3 530M143 391L256 522 372 453M54 511L228 615 256 522M228 615L235 657 333 700 426 495 401 458M426 495L475 517 635 423 620 353M635 423L654 441 771 448 852 366M771 448L830 595M654 441L653 576 593 628 541 625 475 517M653 576L808 616 830 595M808 616L778 785 657 758 593 628M778 785L785 797 934 806M785 797L770 871M657 758L583 809 411 752 541 625M583 809L578 974M411 752L386 760 333 700M386 760L369 834 404 892M369 834L208 916M235 657L109 743 22 739 3 725M22 739L4 960M109 743L208 916",
    p: [[90, 164], [290, 190], [165, 258], [498, 155], [656, 77], [649, 130], [559, 236], [644, 231], [382, 336], [21, 401], [256, 435], [518, 431], [741, 372], [167, 511], [337, 563], [572, 520], [732, 522], [106, 614], [435, 607], [696, 661], [554, 731], [229, 794], [512, 858], [651, 863], [92, 871]],
  },
  {
    at: "0 840",
    d: "M208 76L192 118 31 217 13 211 3 197M13 211L3 220M192 118L360 262 404 52 578 134 599 163 770 31 876 211M599 163L600 216 720 313 876 211M600 216L477 281 366 278 360 262M477 281L507 422 558 441 722 350 720 313M366 278L265 415 247 414 48 254 31 217M48 254L3 440M247 414L64 549 3 499M64 549L68 700 3 718M68 700L121 727 367 613 352 546 265 415M121 727L160 843M352 546L507 422M558 441L577 558 386 626 367 613M577 558L751 605 788 494 722 350M788 494L1014 444M751 605L760 659 733 712 530 822 475 830 386 626M475 830L469 843M530 822L556 843M733 712L784 843M760 659L883 690",
    p: [[323, 131], [447, 157], [750, 149], [225, 245], [77, 426], [438, 401], [561, 375], [512, 494], [617, 474], [184, 575], [281, 778], [568, 650]],
  },
  {
    at: "786 0",
    d: "M151 5L154 72 230 160 471 90 478 5M471 90L514 156 422 392 247 261 228 174 230 160M228 174L39 291 66 366 156 408 166 404 247 261M514 156L606 189 830 139M606 189L672 384 724 388M672 384L556 485 494 470 422 418 422 392M422 418L388 437 166 404M388 437L300 557 156 545 156 408M156 545L126 578 44 595M126 578L221 751 148 806M221 751L292 749 336 689 300 557M336 689L424 675 494 470M424 675L560 746 604 560 556 485M604 560L724 584M560 746L588 811 704 832 724 782M704 832L724 852",
    p: [[22, 40], [280, 20], [672, 52], [83, 186], [152, 298], [349, 251], [264, 361], [571, 338], [723, 287], [65, 475], [246, 475], [392, 583], [504, 621], [702, 491], [666, 661], [112, 697], [233, 630], [423, 771], [241, 874]],
  },
  {
    at: "786 840",
    d: "M90 211L110 211 195 157 148 -34M195 157L298 161 376 60 292 -91M376 60L494 53 588 -29M494 53L560 302 379 323 298 161M379 323L289 460 228 444 110 211M560 302L622 328 670 323 724 190M670 323L724 356M622 328L564 490 508 543 309 511 289 460M564 490L719 631 724 615M719 631L679 767 538 676 508 543M679 767L685 790 724 800M685 790L644 843M309 511L292 637 340 725 538 676M292 637L97 690 175 843M340 725L341 732 250 843M341 732L429 843",
    p: [[96, 70], [605, 137], [437, 182], [231, 287], [98, 352], [471, 449], [661, 518], [601, 585], [150, 583], [442, 621], [197, 756], [477, 769], [91, 812]],
  },
  {
    at: "1506 0",
    d: "M118 5L110 139 172 216 336 191 426 49 422 5M172 216L170 230M336 191L370 230M426 49L645 199 736 121 761 72 746 14 720 5M761 72L857 76M645 199L640 230M736 121L828 225",
    p: [[278, 70], [573, 38], [471, 190]],
  },
];

const VoronoiMap = () => (
  <svg viewBox="3 6 2361 1677" preserveAspectRatio="xMinYMin slice" role="img" aria-label="post-voronoi">
    {sheets.map((s) => (
      <path key={s.at} transform={`translate(${s.at})`} d={s.d} fill="none" stroke="#2b1105" strokeWidth="3" strokeLinejoin="round" />
    ))}
    {sheets.map((s) => (
      <g key={s.at} transform={`translate(${s.at})`} fill="#68ab5c" stroke="#1c2a10" strokeWidth="2.4">
        {s.p.map(([x, y]) => <circle key={`${x}-${y}`} cx={x} cy={y} r="9" />)}
      </g>
    ))}
  </svg>
);

/* ---------- status bar ---------- */

const StatusBar = styled.footer`
  display: flex;
  align-items: center;
  flex: none;
  gap: 6px;
  height: 23px;
  padding-left: 334px;
  font-size: 10px;
`;

const StatusLabel = styled.label`
  display: flex;
  align-items: center;
  gap: 5px;
  white-space: nowrap;
`;

const Field = styled.input<{ $w: number; $center?: boolean }>`
  width: ${(p) => p.$w}px;
  height: 15px;
  padding: 0 3px;
  border: 1px solid #b8b8b8;
  border-radius: 2px;
  background: #fff;
  text-align: ${(p) => (p.$center ? "center" : "left")};
  font-size: 9px;
`;

/* ---------- attribute table window ---------- */

const TableWindow = styled.section`
  position: absolute;
  top: 225px;
  left: 671px;
  right: 0;
  bottom: 0;
  display: flex;
  flex-direction: column;
  border: 1px solid #2f80d0;
  background: #efefef;
`;

const TableTools = styled.div`
  display: flex;
  align-items: center;
  flex: none;
  height: 29px;
`;

const Help = styled.button`
  width: 26px;
  margin-left: auto;
  padding: 0;
  border: 0;
  background: none;
  font: 11px/16px ${gridFont};
`;

const TableArea = styled.div`
  display: flex;
  flex: 1;
  min-height: 0;
  margin: 1px 2px 0 1px;
  border: 1px solid #b0b0b0;
  background: #fff;
`;

const Viewport = styled.div`
  flex: 1;
  min-width: 0;
  overflow: hidden;
  background: linear-gradient(#efefef, #efefef) 0 0 / 100% 18px no-repeat;
`;

const Grid = styled.table`
  table-layout: fixed;
  width: 651px;
  height: 465px;
  border-collapse: separate;
  border-spacing: 0;
  font: 10px/11px ${gridFont};
`;

const raised = css`
  border: 1px solid #8f8f8f;
  border-width: 0 1px 1px 0;
  background: linear-gradient(#fcfcfc, #e6e6e6);
  box-shadow: inset 1px 1px 0 #fff;
  font-weight: 400;
`;

const ColHead = styled.th<{ $first?: boolean }>`
  ${raised}
  position: relative;
  width: ${(p) => (p.$first ? "25px" : "auto")};
  height: 18px;
  padding: 0;
`;

const SortMark = styled.svg`
  position: absolute;
  right: 5px;
  top: 4px;
`;

const RowHead = styled.th`
  ${raised}
  height: 17px;
  padding: 3px 0 0 5px;
  text-align: left;
  vertical-align: top;
`;

const Cell = styled.td<{ $right?: boolean; $ja?: boolean }>`
  height: 17px;
  padding: ${(p) => (p.$right ? "0 3px 0 0" : "0 0 0 3px")};
  border: 1px solid #a6a6a6;
  border-width: 0 1px 1px 0;
  text-align: ${(p) => (p.$right ? "right" : "left")};
  vertical-align: top;
  white-space: nowrap;
  ${(p) => p.$ja && css`font: 11px/11px "Noto Sans CJK JP", sans-serif;`}
`;

const Row = styled.tr`
  &:nth-child(even) { background: #f5f5f5; }
`;

const ScrollBar = styled.div`
  display: flex;
  flex-direction: column;
  width: 14px;
  background: repeating-conic-gradient(#e2e2e2 0 25%, #f6f6f6 0 50%) 0 0 / 2px 2px;
`;

const ScrollButton = styled.button<{ $down?: boolean }>`
  display: grid;
  place-items: center;
  flex: none;
  width: 14px;
  height: 14px;
  padding: 0;
  border: 1px solid #8f8f8f;
  border-radius: 2px;
  background: linear-gradient(#fff, #e4e4e4);
  &::before {
    content: "";
    width: 7px;
    height: 4px;
    background: #111;
    clip-path: ${(p) => (p.$down ? "polygon(0 0, 100% 0, 50% 100%)" : "polygon(0 100%, 100% 100%, 50% 0)")};
  }
`;

const Thumb = styled.div`
  height: 32px;
  padding: 6px 2px;
  border: 1px solid #9a9a9a;
  border-radius: 2px;
  background: radial-gradient(circle, #bbb 1px, transparent 1px) center / 3px 4px, linear-gradient(90deg, #fff, #e6e6e6);
  background-clip: content-box, padding-box;
`;

const Track = styled.div`
  flex: 1;
`;

const Footer = styled.footer`
  display: flex;
  align-items: center;
  flex: none;
  gap: 1px;
  height: 29px;
  padding: 0 3px;
`;

const FootButton = styled.button<{ $on?: boolean; $wide?: boolean }>`
  display: flex;
  align-items: center;
  justify-content: center;
  gap: 3px;
  width: ${(p) => (p.$wide ? 130 : 23)}px;
  height: 22px;
  margin-right: ${(p) => (p.$wide ? "auto" : "0")};
  padding: 0;
  border: 1px solid #8f8f8f;
  border-radius: 3px;
  background: ${(p) => (p.$on ? "#d6d6d6" : "linear-gradient(#fdfdfd, #e8e8e8)")};
  font: 10px/16px Roboto, "Noto Sans CJK JP", sans-serif;
  font-feature-settings: "palt";
  white-space: nowrap;
`;

const DropMark = styled.span`
  align-self: flex-end;
  width: 5px;
  height: 3px;
  margin-bottom: 3px;
  background: #111;
  clip-path: polygon(0 0, 100% 0, 50% 100%);
`;

const rows: [string, string, string, string][] = [
  ["23110", "18003", "伏屋郵…", "伏屋5-214"],
  ["23107", "18003", "川名郵…", "川名本町4-6-12"],
  ["23102", "18003", "東片端…", "泉2-1-9"],
  ["23112", "18003", "浜田郵…", "中割町4-80"],
  ["23116", "18003", "相生山…", "久方1-148"],
  ["23105", "18003", "鴨付郵…", "稲葉地町8-11"],
  ["23111", "18003", "大手郵…", "名四町149"],
  ["23105", "18003", "烏森郵…", "烏森町4-131"],
  ["23106", "18001", "中郵便局", "大須3-1-10"],
  ["23101", "18003", "希望丘…", "希望ケ丘4-10-19"],
  ["23107", "18003", "石仏郵…", "下構町2-25"],
  ["23107", "18003", "北山郵…", "北山本町2-47"],
  ["23111", "18003", "港陽郵…", "港陽1-7-12"],
  ["23107", "18003", "大学病…", "鶴舞町65"],
  ["23114", "18003", "左京山…", "四本木621"],
  ["23102", "18003", "葵郵便局", "葵1-4-35"],
  ["23107", "18003", "阿由知…", "阿由知通2-8-5"],
  ["23115", "18003", "八前郵…", "八前2-1613"],
  ["23109", "18001", "神宮郵…", "六野2-6-1"],
  ["23103", "18003", "如意郵…", "如意5-4"],
  ["23105", "18003", "藤江郵…", "藤江町3-126"],
  ["23103", "18001", "北郵便局", "辻本通2-20-1"],
  ["23101", "18003", "茶屋坂…", "茶屋坂通2-41-2"],
  ["23111", "18003", "港本町…", "名港2-10-8"],
  ["23108", "18003", "中九郵…", "石場町1-4-1"],
];

const WindowControls = ({ w, size, restore }: { w: number; size: number; restore?: boolean }) => (
  <>
    <WindowButton $w={w} aria-label="Minimize">
      <svg width={size} height={size} viewBox="0 0 10 10"><path d="M0 5h10" stroke="#222" /></svg>
    </WindowButton>
    <WindowButton $w={w} aria-label="Maximize">
      <svg width={size} height={size} viewBox="0 0 10 10" fill="none" stroke="#222" strokeWidth="1.2">
        {restore ? <path d="M1 3h6v6H1zM3 3V1h6v6H7" /> : <path d="M1 1h8v8H1z" />}
      </svg>
    </WindowButton>
    <WindowButton $w={w} aria-label="Close">
      <svg width={size} height={size} viewBox="0 0 10 10"><path d="M1 1l8 8M9 1L1 9" stroke="#222" strokeWidth="1.1" /></svg>
    </WindowButton>
  </>
);

export default function App() {
  return (
    <Desktop lang="ja">
      <GlobalStyle />
      <MainWindow>
        <TitleBar>
          <Leaf size={12} />
          <Title $size={9}>QGIS2.8.4-Wien</Title>
          <WindowControls w={34} size={9} restore />
        </TitleBar>
        <MenuBar>
          {menus.map(([name, key]) => (
            <MenuItem key={name}>
              {name}
              {key && <>(<u>{key}</u>)</>}
            </MenuItem>
          ))}
        </MenuBar>
        {bars.map((items, i) => (
          <ToolBar key={i}>
            <Grip $first />
            <Tools items={items} />
            {i < 3 && <More>»</More>}
          </ToolBar>
        ))}
        <Workspace>
          <Dock>
            <DockTitle>
              <Dots />
              レイヤ
              <Dots />
              <DockButton aria-label="Float">
                <svg width="7" height="7" viewBox="0 0 7 7" fill="none" stroke="#111"><path d="M.5 2.5h4v4h-4zM2.5 2V.5h4v4H5" /></svg>
              </DockButton>
              <DockButton aria-label="Close panel">
                <svg width="7" height="7" viewBox="0 0 7 7" stroke="#111" strokeWidth="1.5"><path d="M1 1l5 5M6 1L1 6" /></svg>
              </DockButton>
            </DockTitle>
            <DockTools>
              <Tools w={24} items="layers eye filter expand collapse removeLayer" />
            </DockTools>
            <Tree>
              {layers.map((l, i) => (
                <Layer key={l.name} $on={l.sel} $last={i === layers.length - 1}>
                  {i === 0 && <Expander aria-label="Expand" />}
                  <LayerLabel>
                    <Check type="checkbox" defaultChecked={l.on} />
                    {l.kind === "blob" ? (
                      <svg width="17" height="12" viewBox="0 0 17 12" aria-hidden="true">
                        <path d="M1 9q0-8 4-7t7-1q3 3 0 7-3 1-5-1T1 9z" fill="#ddd" stroke="#999" />
                      </svg>
                    ) : (
                      <Swatch $kind={l.kind} $c={l.c} />
                    )}
                    {l.name}
                    {l.cut && <Ellipsis>…</Ellipsis>}
                  </LayerLabel>
                </Layer>
              ))}
            </Tree>
          </Dock>
          <MapFrame>
            <VoronoiMap />
          </MapFrame>
        </Workspace>
        <StatusBar>
          <ToolButton $w={16} $h={16} $on aria-label="Toggle extents">
            <Art name="mouse" size={14} />
          </ToolButton>
          <StatusLabel>
            座標:
            <Field $w={224} $center defaultValue="-19228,-90562" />
          </StatusLabel>
          <StatusLabel>
            縮尺
            <Field $w={120} defaultValue="1:28,664" />
          </StatusLabel>
        </StatusBar>
      </MainWindow>

      <TableWindow>
        <TitleBar $tall>
          <Leaf size={14} />
          <Title as="h2" $size={10}>属性テーブル - post-voronoi :: 総地物数: 304, フィルター数: 304, 選択数: 0</Title>
          <WindowControls w={41} size={11} />
        </TitleBar>
        <TableTools>
          <Tools w={28} size={18} items="pencil saveTable - trash - epsilon deselect moveTop invert panSel zoomSel copyRows - delColumn newColumn abacus" />
          <Help>?</Help>
        </TableTools>
        <TableArea>
          <Viewport>
            <Grid>
              <thead>
                <tr>
                  <ColHead $first aria-label="row" />
                  {[1, 2, 3, 4, 5, 6, 7].map((n) => (
                    <ColHead key={n} scope="col">
                      P30_00{n}
                      {n === 1 && (
                        <SortMark width="10" height="8" viewBox="0 0 10 8" aria-hidden="true">
                          <path d="M0 .5h9L5 7z" fill="#f6f6f6" stroke="#b5b5b5" />
                        </SortMark>
                      )}
                    </ColHead>
                  ))}
                </tr>
              </thead>
              <tbody>
                {rows.map(([code, kind, office, address], i) => (
                  <Row key={i}>
                    <RowHead scope="row">{i}</RowHead>
                    <Cell>{code}</Cell>
                    <Cell>18</Cell>
                    <Cell>{kind}</Cell>
                    <Cell>18006</Cell>
                    <Cell $ja>名古屋{office}</Cell>
                    <Cell $ja>{address}</Cell>
                    <Cell $right>0</Cell>
                  </Row>
                ))}
              </tbody>
            </Grid>
          </Viewport>
          <ScrollBar>
            <ScrollButton aria-label="Scroll up" />
            <Thumb />
            <Track />
            <ScrollButton aria-label="Page up" />
            <ScrollButton $down aria-label="Scroll down" />
          </ScrollBar>
        </TableArea>
        <Footer>
          <FootButton $wide>
            <Art name="sheet" size={14} />
            全ての地物を表示する
            <DropMark />
          </FootButton>
          <FootButton aria-label="Form view">
            <Art name="form" size={18} />
          </FootButton>
          <FootButton $on aria-label="Table view">
            <Art name="tableView" size={16} />
          </FootButton>
        </Footer>
      </TableWindow>
    </Desktop>
  );
}
